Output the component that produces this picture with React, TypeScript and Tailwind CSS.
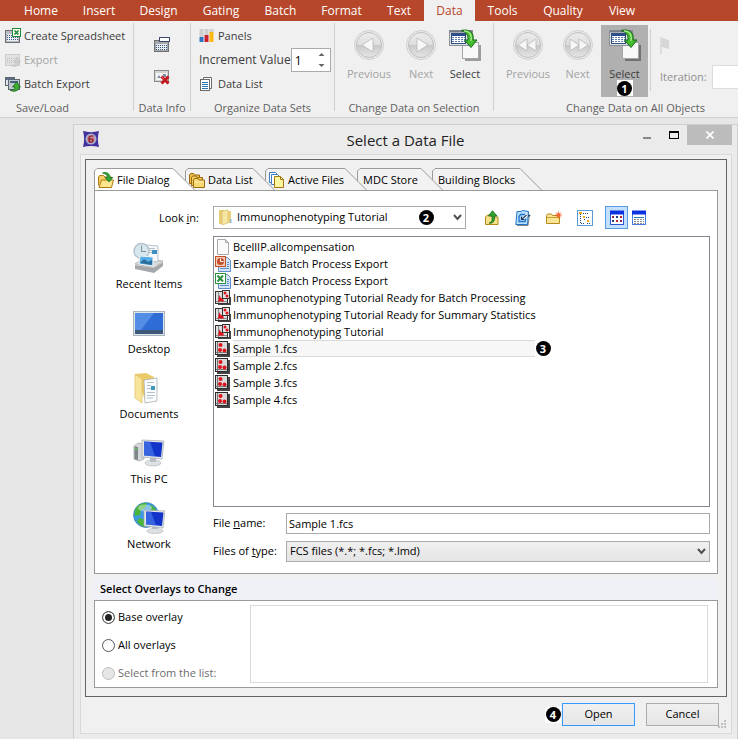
import { useState } from 'react';
import type { ReactNode } from 'react';

const TABS = [
    { name: 'Home', width: 'w-[60px]' },
    { name: 'Insert', width: 'w-[56px]' },
    { name: 'Design', width: 'w-[63px]' },
    { name: 'Gating', width: 'w-[62px]' },
    { name: 'Batch', width: 'w-[57px]' },
    { name: 'Format', width: 'w-[65px]' },
    { name: 'Text', width: 'w-[50px]' },
    { name: 'Data', width: 'w-[51px]' },
    { name: 'Tools', width: 'w-[55px]' },
    { name: 'Quality', width: 'w-[66px]' },
    { name: 'View', width: 'w-[52px]' },
];

const FILES = [
    { name: 'BcellIP.allcompensation', kind: 'blank' },
    { name: 'Example Batch Process Export', kind: 'ppt' },
    { name: 'Example Batch Process Export', kind: 'xls' },
    { name: 'Immunophenotyping Tutorial Ready for Batch Processing', kind: 'layout' },
    { name: 'Immunophenotyping Tutorial Ready for Summary Statistics', kind: 'layout' },
    { name: 'Immunophenotyping Tutorial', kind: 'layout' },
    { name: 'Sample 1.fcs', kind: 'fcs' },
    { name: 'Sample 2.fcs', kind: 'fcs' },
    { name: 'Sample 3.fcs', kind: 'fcs' },
    { name: 'Sample 4.fcs', kind: 'fcs' },
];

/* ---------- icons ---------- */

function Icon({ size = 16, children }: { size?: number; children: ReactNode }) {
    return (
        <svg width={size} height={size} viewBox={`0 0 ${size} ${size}`} className="shrink-0" aria-hidden="true">
            {children}
        </svg>
    );
}

function SheetIcon() {
    return (
        <Icon>
            <rect x=".5" y="2.5" width="14" height="12" fill="#b9bcc0" stroke="#6d7175" />
            <rect x="2" y="6" width="11" height="7" fill="#e8eef5" />
            <path d="M2 7.5h11M2 9.5h11M2 11.5h11" stroke="#3c5a80" strokeDasharray="1 1" />
            <rect x="7.5" y=".5" width="8" height="8" fill="#fff" stroke="#1f8a2e" />
            <path d="M9.500 2.500l4 4M13.500 2.500l-4 4" stroke="#1f8a2e" strokeWidth="1.600" />
        </Icon>
    );
}

function ExportIcon() {
    return (
        <Icon>
            <rect x=".5" y="2.500" width="14" height="11" fill="#e2e2e2" stroke="#cdcdcd" />
            <path d="M2 6.500h7M2 8.500h6M2 10.500h5" stroke="#bdbdbd" strokeDasharray="1 1" />
            <path d="M6 13c4 1 5-1 5-3H8.500L12 5l3.500 5H14c0 4-4 6-8 3z" fill="#cfcfcf" stroke="#bcbcbc" strokeWidth=".6" />
        </Icon>
    );
}

function BatchIcon() {
    return (
        <Icon>
            <rect x=".5" y="1.500" width="9" height="8" fill="#dfe6ef" stroke="#5d6670" />
            <path d="M1 3h8" stroke="#5a6f8c" strokeWidth="2" />
            <rect x="3.500" y="3.500" width="11" height="10" fill="#c3c9d1" stroke="#5d6670" />
            <path d="M5 6h8" stroke="#45607f" strokeWidth="2" />
            <path d="M5 14c4 1 5-1 5-3H7.500L11.500 6l4 5H14c0 4-5 5.500-9 3z" fill="#3fae2c" stroke="#19641a" strokeWidth=".8" />
        </Icon>
    );
}

function DataInfoIcon() {
    return (
        <Icon>
            <rect x=".5" y="3.500" width="14" height="11" fill="#a6a8ab" stroke="#6e7073" />
            <rect x="5.500" y=".5" width="10" height="4" fill="#fff" stroke="#3a4a66" />
            <rect x="2" y="7" width="11" height="6" fill="#e8eef5" />
            <path d="M2 8.500h11M2 10.500h11M2 12.500h11" stroke="#3b5379" strokeDasharray="1 1" />
        </Icon>
    );
}

function RemoveInfoIcon() {
    return (
        <Icon>
            <rect x=".5" y="1.500" width="14" height="11" fill="#d4d4d4" stroke="#8b8b8b" />
            <rect x="2" y="4" width="11" height="7" fill="#f5f5f5" />
            <path d="M3 9l2-3 2 3zM9 5h3v3H9z" fill="#7f8fa8" />
            <path d="M7.500 7.500l7 7M14.500 7.500l-7 7" stroke="#c4161c" strokeWidth="3" />
            <path d="M8 8l2 2" stroke="#ef6a6a" />
        </Icon>
    );
}

function PanelsIcon() {
    return (
        <Icon>
            <path d="M2.500 1v8M7.500 1v6M12.500 1v4" stroke="#cfcfcf" strokeWidth="4" />
            <path d="M2.500 9v5" stroke="#2f74c0" strokeWidth="4" />
            <path d="M7.500 7v7" stroke="#c8202c" strokeWidth="4" />
            <path d="M12.500 4v10" stroke="#fdb913" strokeWidth="4" />
        </Icon>
    );
}

function DataListIcon() {
    return (
        <Icon>
            <path d="M4.500 3V1.500h8v11H11" fill="#fff" stroke="#6b6b6b" />
            <rect x="1.500" y="3.500" width="9" height="11" fill="#fff" stroke="#6b6b6b" />
            <path d="M3 6.500h6M3 8.500h6M3 10.500h6M3 12.500h6" stroke="#2e75b6" />
        </Icon>
    );
}

function RoundIcon({ path }: { path: string }) {
    return (
        <Icon size={32}>
            <defs>
                <linearGradient id="disc" x1="0" y1="0" x2="0" y2="1">
                    <stop offset="0" stopColor="#ececec" />
                    <stop offset=".5" stopColor="#dedede" />
                    <stop offset=".52" stopColor="#c9c9c9" />
                    <stop offset="1" stopColor="#e6e6e6" />
                </linearGradient>
            </defs>
            <circle cx="16" cy="16" r="14.500" fill="#ededed" stroke="#cfcfcf" />
            <circle cx="16" cy="16" r="12.500" fill="url(#disc)" stroke="#bdbdbd" />
            <path d={path} fill="#f7f7f7" stroke="#b9b9b9" strokeWidth=".8" />
        </Icon>
    );
}

function SelectIcon() {
    return (
        <Icon size={32}>
            <path d="M16 31h15V16" fill="none" stroke="#000" strokeOpacity=".35" strokeWidth="2" />
            <rect x="13.500" y="13.500" width="16" height="16" fill="#f8f8f8" stroke="#a5a5a5" />
            <rect x=".5" y="1.500" width="23" height="15" fill="#dcdfe3" stroke="#8b9097" />
            <path d="M1 2.500h22" stroke="#777c84" strokeWidth="2" />
            <rect x="2.500" y="4.500" width="14" height="10" fill="#fff" stroke="#33517f" />
            <path d="M3 6h13" stroke="#2a4c8c" strokeWidth="2" />
            <path d="M3 8.500h13M3 10.500h13M3 12.500h13" stroke="#5479ad" strokeDasharray="2 1" />
            <path d="M12 1.500c8-2 13.500 2 12 9.500h4L22 18.500 15.500 11H19c.5-5-2-8-7-9.500z" fill="#45bd2f" stroke="#17651a" />
            <path d="M15 2c5-.5 8 3 7 10" fill="none" stroke="#a5ea8c" strokeWidth="1.400" />
        </Icon>
    );
}

function AppIcon() {
    return (
        <Icon>
            <path d="M0 0c5 1.500 11 1.500 16 0-1.500 5-1.500 11 0 16-5-1.500-11-1.500-16 0 1.500-5 1.500-11 0-16z" fill="#43309a" />
            <circle cx="8" cy="8" r="5.500" fill="#9fb3d8" />
            <circle cx="8" cy="8" r="4" fill="#c98a94" />
            <path d="M10.500 5H8.300C6.600 5 6 6 6 7.500v2c0 1.200.8 1.700 2 1.700s2-.6 2-1.700-.6-1.700-2-1.700-1.800.5-1.800 1.300" fill="none" stroke="#8c1626" strokeWidth="1.200" />
        </Icon>
    );
}

function Folder({ arrow = false }: { arrow?: boolean }) {
    return (
        <Icon>
            <path d="M.5 13.500V5l1-1.500h4L7 5h6.500v2" fill="#f3cf63" stroke="#b07a14" />
            <path d="M1 15.500L3.500 8H15.500L13.500 15.500z" fill="#fbe58d" stroke="#b07a14" />
            {arrow && <path d="M4.500 1c4-1.500 7.500.5 7.500 4.500h2.800L11 10 7 5.500h2.500C9.500 3 7.500 1.800 4.500 1z" fill="#2ea836" stroke="#116c1c" strokeWidth=".7" />}
        </Icon>
    );
}

function FolderStack() {
    return (
        <Icon>
            <path d="M.5 11.500V3l1-1.500h3L5.500 3h5v8.500z" fill="#eec04c" stroke="#9a6a10" />
            <path d="M2.500 13.500V5.500l1-1.500H7L8 5.500h5.500v8z" fill="#f2cb5e" stroke="#9a6a10" />
            <path d="M4.500 15.500V8l1-1.500H9L10 8h5.500v7.500z" fill="#f7d873" stroke="#9a6a10" />
            <path d="M5 10h10" stroke="#fdf0b5" />
        </Icon>
    );
}

function ActiveFilesIcon() {
    return (
        <Icon>
            <path d="M.5.500h6l2 2v8h-8z" fill="#fff" stroke="#3b7cc4" />
            <path d="M2.500 2.500h6l2 2v8h-8z" fill="#fff" stroke="#3b7cc4" />
            <path d="M5.500 4.500h6l3 3v8h-9z" fill="#fff7a0" stroke="#a5780f" />
            <path d="M11.500 4.500v3h3" fill="none" stroke="#a5780f" />
        </Icon>
    );
}

function ClosedFolder() {
    return (
        <Icon>
            <path d="M2 1h5v14H2z" fill="#e7cd74" />
            <path d="M5 2l6-1v13l-6 2z" fill="#f6e6a4" stroke="#d3b65b" strokeWidth=".6" />
            <path d="M11 2h3v12h-3z" fill="#e9cf78" />
            <path d="M13 10h1.500v4H13z" fill="#8fb8d8" />
        </Icon>
    );
}

function UpFolderIcon() {
    return (
        <Icon>
            <path d="M1.500 14.500V7l2-2h3l1 2h6.500v7.500z" fill="#f7e08a" stroke="#b58a1c" />
            <path d="M5 13c3-.5 3.500-3 3-7H4.500L8.500.8 13 6h-2.500c.5 5-1.500 8-5.500 7z" fill="#2fa52f" stroke="#0f6616" strokeWidth=".8" />
        </Icon>
    );
}

function GoToIcon() {
    return (
        <Icon>
            <path d="M2 15.500h11l1.500-11" fill="none" stroke="#222" strokeOpacity=".55" />
            <path d="M2 1.500h4L7.500.5 13.500 1.500l-1 13H.8z" fill="#b9e0fb" stroke="#1e72c8" />
            <path d="M10 4.500H5.500L4 6.500v5h6l1-3" fill="none" stroke="#1e72c8" strokeWidth="1.300" />
            <path d="M6.500 9.500l6-5" stroke="#fff" strokeWidth="2.500" />
            <path d="M6.500 9.500l5-4.500M6.500 6.500v3h3" fill="none" stroke="#1b3c66" strokeWidth="1.200" />
            <path d="M12.500 4.500l3.500 1-3 1.500z" fill="#24456f" />
        </Icon>
    );
}

function NewFolderIcon() {
    return (
        <Icon>
            <path d="M.5 13.500V5.500l1-1.500h4l1 1.500h7v8z" fill="#f9e596" stroke="#b58a1c" />
            <path d="M1 7.500h12" stroke="#c79b2c" />
            <circle cx="12.500" cy="5" r="1.800" fill="#f04a1e" />
            <path d="M12.500 1.500v7M9 5h7M10 2.500l5 5M15 2.500l-5 5" stroke="#f46a34" strokeWidth=".9" />
        </Icon>
    );
}

function TreeIcon() {
    return (
        <Icon>
            <rect x=".5" y=".5" width="15" height="15" fill="#fff" stroke="#5b9bd5" />
            <path d="M3.500 4v10M7.500 7v4" stroke="#1f3f80" strokeDasharray="1 1" />
            <path d="M2 2h3v2H2zM6 6h2v2H6zM10 10h2v2h-2z" fill="#e8a713" />
            <path d="M6 3.500h6M9 7.500h3M4 13.500h3M10 13.500h3" stroke="#24477d" strokeDasharray="1 1" />
        </Icon>
    );
}

function GridViewIcon() {
    return (
        <Icon>
            <rect x="1.500" y="1.500" width="13" height="13" fill="#fff" stroke="#2a55d4" />
            <path d="M1 2.500h14" stroke="#0a32e0" strokeWidth="4" />
            <path d="M3 6h2v2H3zM11 10h2v2h-2z" fill="#8c2448" />
            <path d="M7 6h2v2H7zM3 10h2v2H3z" fill="#1c3f8c" />
            <path d="M11 6h2v2h-2zM7 10h2v2H7z" fill="#c0272d" />
        </Icon>
    );
}

function ListViewIcon() {
    return (
        <Icon>
            <rect x="1.500" y="1.500" width="13" height="13" fill="#fff" stroke="#4a7be0" />
            <path d="M1 2.500h14" stroke="#0a32e0" strokeWidth="4" />
            <path d="M3 7.500h10" stroke="#2a78b8" />
            <path d="M3 9.500h10M3 11.500h10M3 13.500h10" stroke="#8c8c8c" strokeDasharray="2 1" />
        </Icon>
    );
}

function FileIcon({ kind }: { kind: string }) {
    if (kind === 'blank') {
        return (
            <Icon>
                <path d="M2.500.500h8l3 3v12h-11z" fill="#fafafa" stroke="#a9a9a9" />
                <path d="M10.500.500v3h3" fill="none" stroke="#a9a9a9" />
            </Icon>
        );
    }
    if (kind === 'ppt' || kind === 'xls') {
        const color = kind === 'ppt' ? '#c4502a' : '#2d9140';
        return (
            <Icon>
                <path d="M3.500 1.500h9l3 3v11h-12z" fill="#d3e4f8" stroke="#5f8cc8" />
                <path d="M5 12.500h9M12 6.500h2M12 8.500h2M12 10.500h2" stroke="#5d8fd0" />
                <rect x=".5" y=".5" width="10" height="10" fill={kind === 'ppt' ? '#f3c9b3' : '#fff'} stroke={color} />
                {kind === 'ppt' ? (
                    <g>
                        <circle cx="5.500" cy="5.500" r="3.500" fill={color} />
                        <path d="M5.500 5.500V2.500M5.500 5.500h3" stroke="#fff" />
                    </g>
                ) : (
                    <path d="M2.500 2.500l5.500 6M8 2.500l-5.500 6" stroke={color} strokeWidth="2" />
                )}
            </Icon>
        );
    }
    if (kind === 'layout') {
        return (
            <Icon>
                <path d="M3 13h11V7h2v8H3z" fill="#444" />
                <rect x=".5" y="1.500" width="12" height="12" fill="#ddd" stroke="#333" />
                <path d="M3.500 2v11M1 11.500h11" stroke="#8b8b8b" />
                <path d="M3 11.500L4.500 5 6 8.500l1.500-1.500L9 11.500z" fill="#e0131b" />
                <rect x="7.500" y=".5" width="7" height="8" fill="#e4e4e4" stroke="#333" />
                <circle cx="10" cy="3" r="1.500" fill="#e0131b" />
                <circle cx="12" cy="6" r="1.500" fill="#e0131b" />
            </Icon>
        );
    }
    return (
        <Icon>
            <path d="M2 2h13v14H2z" fill="#444" />
            <rect x=".5" y=".5" width="12" height="13" fill="#d9d9d9" stroke="#2b2b2b" />
            <path d="M2.500 1v12M1 11.500h11" stroke="#777" />
            <circle cx="5.500" cy="4" r="2" fill="#e0131b" />
            <circle cx="5" cy="9" r="2" fill="#e0131b" />
            <circle cx="9.500" cy="9.500" r="2" fill="#e0131b" />
        </Icon>
    );
}

function PlaceIcon({ name }: { name: string }) {
    if (name === 'Recent Items') {
        return (
            <Icon size={32}>
                <path d="M2 23l19 3 9-6v4l-9 7-19-4z" fill="#a5a8aa" />
                <path d="M2 22l8-6 20 3-9 7z" fill="#d9dbdc" stroke="#999" strokeWidth=".6" />
                <path d="M13 3l12 1v16l-12-2z" fill="#f6f9fb" stroke="#aab4bc" strokeWidth=".8" />
                <path d="M15 6.500h7M15 8.500h4M15 10.500h4" stroke="#b4bec7" />
                <path d="M19 8h5v4h-5z" fill="#3d8fc0" />
                <circle cx="8.500" cy="9" r="7.500" fill="#d8e6ee" stroke="#b3c2cc" strokeWidth="1.400" />
                <path d="M8.500 3.500V9.500H13" fill="none" stroke="#7d929f" />
                <path d="M7 14l13 1v9L6 22z" fill="#55aee6" stroke="#f2f2f2" />
                <path d="M7 21l4-4 4 3 4-2v5z" fill="#2a6d9a" />
            </Icon>
        );
    }
    if (name === 'Desktop') {
        return (
            <Icon size={32}>
                <rect x=".5" y="4.500" width="31" height="24" fill="#dfe5ec" stroke="#a9b3c0" />
                <rect x="2" y="6" width="28" height="20" fill="#2f6cd6" />
                <path d="M2 6h19L8 23H2z" fill="#6ea3ee" opacity=".6" />
                <path d="M2 23h28v4H2z" fill="#3d5878" />
            </Icon>
        );
    }
    if (name === 'Documents') {
        return (
            <Icon size={32}>
                <path d="M2 2l11-1 8 4v22l-8 4z" fill="#eacb67" />
                <path d="M11 8l13-2v23l-12 2z" fill="#fafcfd" stroke="#a9b0b5" strokeWidth=".8" />
                <path d="M14 10.500h7M14 13.500h4M14 16.500h4M14 20.500h8M14 23.500h8M14 26h6" stroke="#b5c2cc" />
                <path d="M18 14h4v4h-4z" fill="#3e97b8" />
                <path d="M2 2l7 5v24l-7-5z" fill="#f8e49a" stroke="#d8b954" strokeWidth=".6" />
            </Icon>
        );
    }
    if (name === 'This PC') {
        return (
            <Icon size={32}>
                <path d="M1 9l4-3 6 1v15l-5 2-5-2z" fill="#d5d8da" stroke="#9aa0a4" strokeWidth=".7" />
                <path d="M1.500 9.500l3.500.5v13l-3.500-1z" fill="#7e858b" />
                <circle cx="3" cy="12" r="1" fill="#53d43c" />
                <ellipse cx="20" cy="26" rx="8" ry="3" fill="#dfe2e4" stroke="#aab0b5" strokeWidth=".6" />
                <path d="M17 19h6v6h-6z" fill="#b9bec4" />
                <path d="M9 3l22 1-2 18-20-2z" fill="#e4e7ea" stroke="#a1a8ae" strokeWidth=".7" />
                <path d="M11 4.500l18.500 1L28 20l-17-1.500z" fill="#1234c8" />
                <path d="M11 4.500h6l5 15-11-1z" fill="#4f86f0" opacity=".6" />
            </Icon>
        );
    }
    return (
        <Icon size={32}>
            <circle cx="13" cy="13" r="12.500" fill="#3c9be0" stroke="#2a6fae" strokeWidth=".6" />
            <path d="M3 6c4-5 8-5 11-5l-2 5-4 2-1 5-5 1c-1-3 0-6 1-8zM6 16l6 2 1 7c-4 0-8-3-9-6zM17 3c4 1 6 4 7 7l-6-2z" fill="#4bb53c" />
            <ellipse cx="12" cy="6" rx="7" ry="3.500" fill="#fff" opacity=".4" />
            <path d="M19 24h6v5h-6z" fill="#b9bec4" />
            <ellipse cx="22" cy="29" rx="8" ry="2.500" fill="#dfe2e4" stroke="#aab0b5" strokeWidth=".6" />
            <path d="M11 8l21 1-2 17-19-2z" fill="#e4e7ea" stroke="#a1a8ae" strokeWidth=".7" />
            <path d="M13 9.500l17.500 1L29 24l-16-1.500z" fill="#1234c8" />
            <path d="M13 9.500h5l5 14-10-1z" fill="#4f86f0" opacity=".6" />
        </Icon>
    );
}

function Chevron() {
    return (
        <svg width="9" height="7" viewBox="0 0 9 7" aria-hidden="true">
            <path d="M1 1l3.500 4L8 1" fill="none" stroke="#505050" strokeWidth="2" />
        </svg>
    );
}

/* ---------- small pieces ---------- */

function Badge({ n }: { n: number }) {
    return (
        <span className="flex h-4 w-4 shrink-0 items-center justify-center bg-white">
            <span className="flex h-[15px] w-[15px] items-center justify-center rounded-full bg-black text-[11px] leading-none font-bold text-white">
                {n}
            </span>
        </span>
    );
}

function Group({ caption, width, children }: { caption: string; width: string; children: ReactNode }) {
    return (
        <section className={`flex shrink-0 flex-col ${width}`}>
            <div className="h-[76px]">{children}</div>
            <h2 className="pt-px text-center leading-4 text-[#5f5f5f]">{caption}</h2>
        </section>
    );
}

function Separator() {
    return <div className="h-[88px] w-px shrink-0 bg-[#d0d0d0]" />;
}

function RowButton({ icon, label, disabled = false }: { icon: ReactNode; label: string; disabled?: boolean }) {
    return (
        <button disabled={disabled} className="flex h-6 items-center gap-[3px] whitespace-nowrap disabled:text-[#a3a3a3]">
            {icon}
            {label}
        </button>
    );
}

function BigButton({ icon, label, disabled = false, width }: { icon: ReactNode; label: string; disabled?: boolean; width: string }) {
    return (
        <button disabled={disabled} className={`flex shrink-0 flex-col items-center gap-[5px] pt-1 disabled:text-[#a3a3a3] ${width}`}>
            {icon}
            <span className="leading-4">{label}</span>
        </button>
    );
}

function FileTab({ label, width, icon, active = false, className = '' }: { label: string; width: number; icon?: ReactNode; active?: boolean; className?: string }) {
    return (
        <button style={{ width }} className={`relative flex h-[23px] shrink-0 items-center gap-[3px] pt-px whitespace-nowrap ${className}`}>
            <svg width={width} height="23" className="absolute inset-0 -z-10" aria-hidden="true">
                <path d={`M.5 23V3L3 .5H${width - 23}L${width - 1} 22.500`} fill={active ? '#ffffff' : '#f2f2f2'} stroke="#9a9a9a" />
                {!active && <path d={`M0 22.500H${width}`} stroke="#9a9a9a" />}
            </svg>
            {icon}
            {label}
        </button>
    );
}

/* ---------- main sections ---------- */

function Ribbon() {
    return (
        <header className="overflow-hidden border-b border-[#d0d0d0] bg-[#f0f0f0] text-[11px] text-[#3c3c3c]">
            <nav className="flex h-[21px] bg-[#b7472a] pl-[11px] text-[12px]">
                {TABS.map((tab) => (
                    <button
                        key={tab.name}
                        className={`shrink-0 ${tab.width} ${tab.name === 'Data' ? 'bg-[#f0f0f0] text-[#b7472a]' : 'text-white'}`}
                    >
                        {tab.name}
                    </button>
                ))}
            </nav>
            <div className="flex pt-0.5 pb-px">
                <Group caption="Save/Load" width="w-[85px]">
                    <div className="flex flex-col items-start pt-px pl-[5px]">
                        <RowButton icon={<SheetIcon />} label="Create Spreadsheet" />
                        <RowButton icon={<ExportIcon />} label="Export" disabled />
                        <RowButton icon={<BatchIcon />} label="Batch Export" />
                    </div>
                </Group>
                <div className="w-12 shrink-0" />
                <Separator />
                <Group caption="Data Info" width="w-[56px]">
                    <div className="flex flex-col items-center gap-4 pt-[14px]">
                        <button aria-label="Data info"><DataInfoIcon /></button>
                        <button aria-label="Remove data info"><RemoveInfoIcon /></button>
                    </div>
                </Group>
                <Separator />
                <Group caption="Organize Data Sets" width="w-[143px]">
                    <div className="flex flex-col items-start pt-px pl-2">
                        <RowButton icon={<PanelsIcon />} label="Panels" />
                        <div className="flex h-6 w-[131px] items-center justify-between">
                            <label htmlFor="increment" className="text-[12px] whitespace-nowrap">Increment Value</label>
                            <div className="relative">
                                <input id="increment" defaultValue="1" className="block h-6 w-10 border border-[#ababab] bg-white pl-[3px] text-[12px] text-black outline-none" />
                                <svg width="7" height="16" viewBox="0 0 7 16" className="absolute top-1 right-[6px]" aria-hidden="true">
                                    <path d="M.5 4L3.500 1l3 3zM.5 12l3 3 3-3z" fill="#666" />
                                </svg>
                            </div>
                        </div>
                        <RowButton icon={<DataListIcon />} label="Data List" />
                    </div>
                </Group>
                <Separator />
                <Group caption="Change Data on Selection" width="w-[158px]">
                    <div className="flex pt-0.5 pl-2">
                        <BigButton icon={<RoundIcon path="M20 9v14l-11-7z" />} label="Previous" width="w-[52px]" disabled />
                        <BigButton icon={<RoundIcon path="M12 9v14l11-7z" />} label="Next" width="w-[52px]" disabled />
                        <BigButton icon={<SelectIcon />} label="Select" width="w-9" />
                    </div>
                </Group>
                <Separator />
                <Group caption="Change Data on All Objects" width="w-[283px]">
                    <div className="flex pt-0.5 pl-2">
                        <BigButton icon={<RoundIcon path="M15 10v12l-9-6zM24 10v12l-9-6z" />} label="Previous" width="w-[52px]" disabled />
                        <BigButton icon={<RoundIcon path="M8 10v12l9-6zM17 10v12l9-6z" />} label="Next" width="w-[47px]" disabled />
                        <div className="flex h-[72px] flex-col items-center bg-[#b0b0b0]">
                            <BigButton icon={<SelectIcon />} label="Select" width="w-[47px] -mb-0.5" />
                            <Badge n={1} />
                        </div>
                        <div className="mt-1 mr-[9px] ml-0.5 h-[62px] w-px bg-[#d0d0d0]" />
                        <div className="flex flex-col pt-3">
                            <svg width="10" height="18" viewBox="0 0 10 18" aria-hidden="true">
                                <path d="M1 0v17" stroke="#d6d6d6" strokeWidth="1.500" />
                                <path d="M2 1c3 0 4 2 7 2v9c-3 0-4-2-7-2z" fill="#d6d6d6" />
                            </svg>
                            <div className="mt-[10px] flex items-center gap-1 text-[#8f8f8f]">
                                <label htmlFor="iteration" className="w-12">Iteration:</label>
                                <input id="iteration" className="h-6 w-16 border border-[#dcdcdc] bg-white outline-none" />
                            </div>
                        </div>
                    </div>
                </Group>
            </div>
        </header>
    );
}

function TitleBar() {
    return (
        <div className="grid h-[29px] grid-cols-[1fr_auto_1fr]">
            <div className="pt-1.5 pl-[9px]"><AppIcon /></div>
            <h1 className="pt-px text-[15px] leading-7 text-[#222222]">Select a Data File</h1>
            <div className="flex justify-end pr-[5px]">
                <button aria-label="Minimize" className="flex h-5 w-[26px] items-center justify-center">
                    <span className="mt-[5px] h-[2px] w-2 bg-[#888888]" />
                </button>
                <button aria-label="Maximize" className="flex h-5 w-[27px] items-center justify-center">
                    <span className="h-2 w-[10px] border border-t-2 border-black" />
                </button>
                <button aria-label="Close" className="flex h-5 w-[45px] items-center justify-center bg-[#bcbcbc]">
                    <svg width="8" height="8" viewBox="0 0 8 8" aria-hidden="true">
                        <path d="M.5.500l7 7M7.500.500l-7 7" stroke="#fff" strokeWidth="1.600" />
                    </svg>
                </button>
            </div>
        </div>
    );
}

function FilePanel() {
    const [selected, setSelected] = useState('Sample 1.fcs');

    return (
        <div className="relative -mt-px grid grid-cols-[118px_1fr] border border-[#9a9a9a] bg-white pt-[15px] pr-[7px] pb-[11px]">
            <label htmlFor="look-in" className="pr-[14px] text-right leading-[23px]">Look <u>i</u>n:</label>
            <div className="flex items-center">
                <div className="relative w-[253px]">
                    <select id="look-in" className="block h-[23px] w-full appearance-none border border-[#ababab] bg-white pl-[23px] outline-none">
                        <option>Immunophenotyping Tutorial</option>
                    </select>
                    <div className="pointer-events-none absolute top-[3px] left-1"><ClosedFolder /></div>
                    <div className="pointer-events-none absolute top-[3px] right-8"><Badge n={2} /></div>
                    <div className="pointer-events-none absolute top-2 right-1"><Chevron /></div>
                </div>
                <div className="ml-[18px] flex items-center gap-[15px]">
                    <button aria-label="Up one level"><UpFolderIcon /></button>
                    <button aria-label="Go to"><GoToIcon /></button>
                    <button aria-label="New folder"><NewFolderIcon /></button>
                    <button aria-label="Tree"><TreeIcon /></button>
                </div>
                <button aria-label="Icons" className="ml-3 flex h-[23px] w-[23px] items-center justify-center border border-[#569de5] bg-[#c4e0fc]">
                    <GridViewIcon />
                </button>
                <button aria-label="Details" className="ml-[3px]"><ListViewIcon /></button>
            </div>

            <div className="row-span-3 flex flex-col items-center gap-[15px] pt-[13px] pr-[10px]">
                {['Recent Items', 'Desktop', 'Documents', 'This PC', 'Network'].map((place) => (
                    <button key={place} className="flex flex-col items-center gap-0.5 leading-4">
                        <PlaceIcon name={place} />
                        {place}
                    </button>
                ))}
            </div>
            <div className="mt-[7px] min-h-[271px] border border-[#828790] pt-px pl-px">
                {FILES.map((file, i) => (
                    <div key={i} className="flex h-[17px] items-center">
                        <FileIcon kind={file.kind} />
                        <button
                            onClick={() => setSelected(file.name)}
                            className={`ml-0.5 h-[17px] w-[302px] border-y text-left leading-[15px] whitespace-nowrap ${selected === file.name ? 'border-[#dadada] bg-[#f7f7f7]' : 'border-transparent'}`}
                        >
                            {file.name}
                        </button>
                        {file.name === 'Sample 1.fcs' && <Badge n={3} />}
                    </div>
                ))}
            </div>

            <div className="col-start-2 mt-[6px] flex items-center">
                <label htmlFor="file-name" className="w-[73px]">File <u>n</u>ame:</label>
                <input id="file-name" defaultValue="Sample 1.fcs" className="h-[21px] min-w-0 flex-1 border border-[#ababab] bg-white px-0.5 outline-none" />
            </div>
            <div className="col-start-2 mt-[7px] flex items-center">
                <label htmlFor="file-type" className="w-[73px] whitespace-nowrap">Files of <u>t</u>ype:</label>
                <div className="relative flex-1">
                    <select id="file-type" className="block h-[21px] w-full appearance-none border border-[#ababab] bg-linear-to-b from-[#f0f0f0] to-[#e5e5e5] pl-[3px] outline-none">
                        <option>FCS files (*.*; *.fcs; *.lmd)</option>
                    </select>
                    <div className="pointer-events-none absolute top-[7px] right-1"><Chevron /></div>
                </div>
            </div>
        </div>
    );
}

function OverlayOption({ id, label, checked = false, disabled = false }: { id: string; label: string; checked?: boolean; disabled?: boolean }) {
    return (
        <div className="flex h-7 items-center gap-[3px]">
            <input
                type="radio"
                name="overlay"
                id={id}
                defaultChecked={checked}
                disabled={disabled}
                className="h-[13px] w-[13px] appearance-none rounded-full border border-[#555555] bg-white checked:bg-[#222222] checked:shadow-[inset_0_0_0_2px_#ffffff] disabled:border-[#bcbcbc] disabled:bg-[#e6e6e6]"
            />
            <label htmlFor={id} className={`whitespace-nowrap ${disabled ? 'text-[#6d6d6d]' : ''}`}>{label}</label>
        </div>
    );
}

export default function App() {
    return (
        <div className="min-h-screen bg-[#e6e6e6] font-['Open_Sans','Noto_Sans',sans-serif]">
            <Ribbon />
            <main className="mt-1.5 ml-[73px] border border-[#cfcfcf] bg-[#ebebeb] text-[11px] text-black">
                <TitleBar />
                <div className="mr-[5px] mb-1.5 ml-1.5 border border-[#d9d9d9] bg-[#f0f0f0] p-1">
                    <div className="border border-[#646464] p-2">
                        <div className="relative isolate flex">
                            <FileTab label="File Dialog" width={102} icon={<Folder arrow />} active className="z-50 pl-1" />
                            <FileTab label="Data List" width={91} icon={<FolderStack />} className="z-40 -ml-[11px] pl-1" />
                            <FileTab label="Active Files" width={103} icon={<ActiveFilesIcon />} className="z-30 -ml-[11px] pl-1" />
                            <FileTab label="MDC Store" width={87} className="z-20 -ml-[11px] pl-1.5" />
                            <FileTab label="Building Blocks" width={111} className="z-10 -ml-3 pl-1.5" />
                        </div>
                        <FilePanel />
                        <h2 className="mt-1 h-[22px] bg-[#eff1f7] pl-1.5 leading-[22px] font-semibold">Select Overlays to Change</h2>
                        <div className="flex border border-[#9a9a9a] bg-white py-1 pr-[9px] pl-[7px]">
                            <div className="-mt-0.5 -mb-1 w-[148px]">
                                <OverlayOption id="base" label="Base overlay" checked />
                                <OverlayOption id="all" label="All overlays" />
                                <OverlayOption id="from-list" label="Select from the list:" disabled />
                            </div>
                            <div className="h-[78px] flex-1 border border-[#d9d9d9]" />
                        </div>
                    </div>
                    <div className="flex items-center justify-end pt-1.5 pr-2 pb-0">
                        <Badge n={4} />
                        <button className="ml-px h-[23px] w-[73px] border border-[#3399ff] bg-linear-to-b from-[#f0f0f0] to-[#e5e5e5]">Open</button>
                        <button className="ml-[11px] h-[23px] w-[73px] border border-[#acacac] bg-linear-to-b from-[#f0f0f0] to-[#e5e5e5]">Cancel</button>
                    </div>
                    <div className="-mt-1.5 flex justify-end">
                        <svg width="9" height="9" viewBox="0 0 9 9" aria-hidden="true">
                            <path d="M6 0h2v2H6zM3 3h2v2H3zM6 3h2v2H6zM0 6h2v2H0zM3 6h2v2H3zM6 6h2v2H6z" fill="#bfbfbf" />
                        </svg>
                    </div>
                </div>
            </main>
        </div>
    );
}
